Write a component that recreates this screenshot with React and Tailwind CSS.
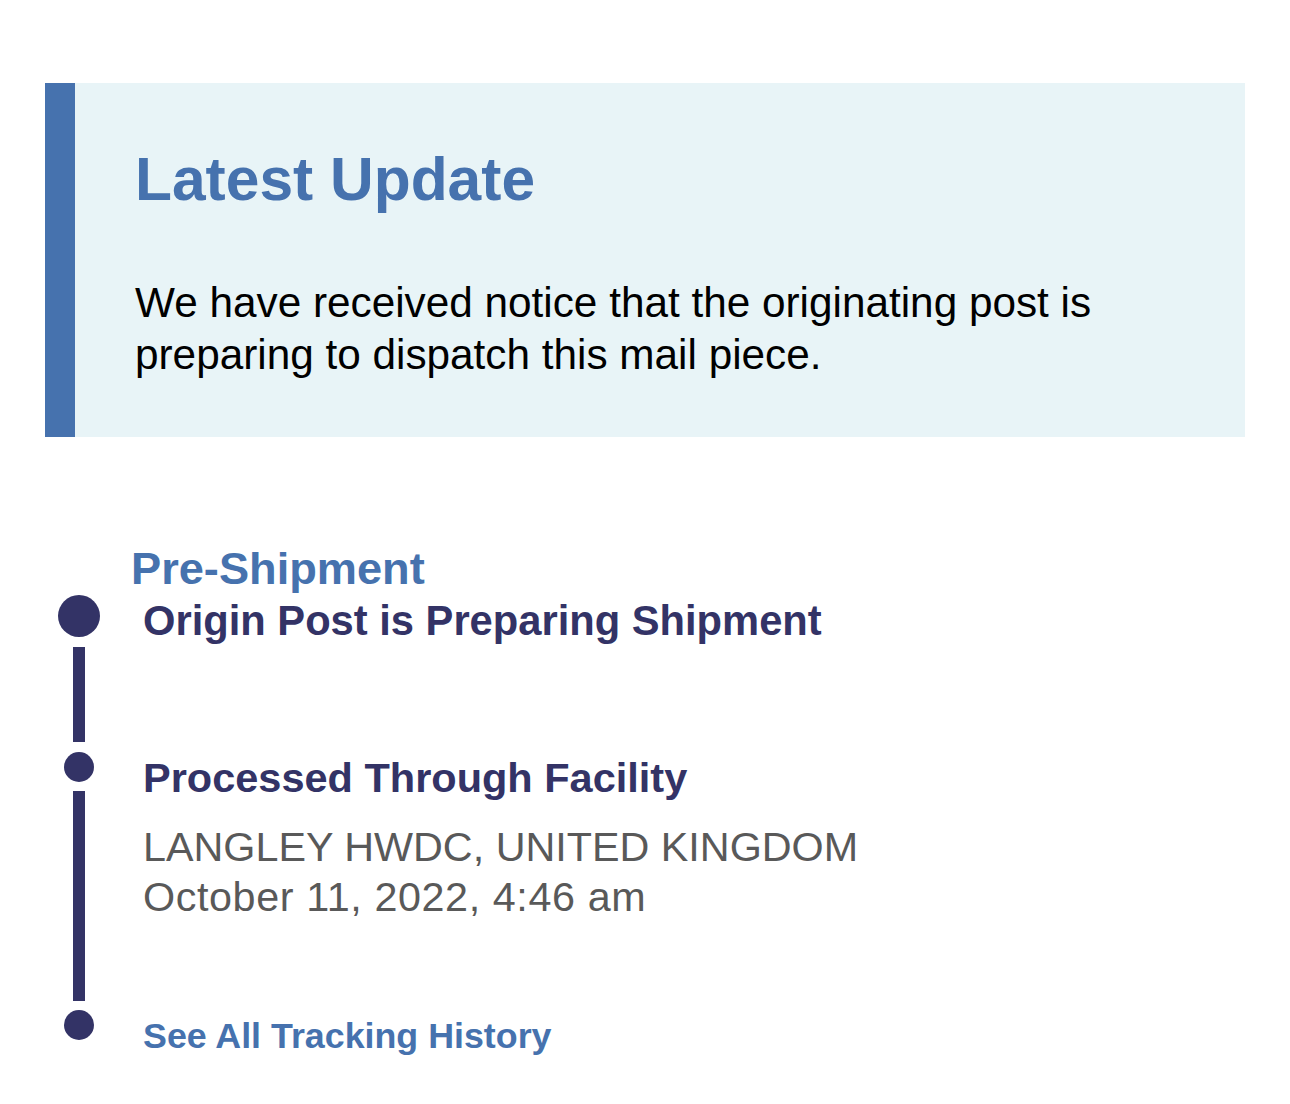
const font = { fontFamily: '"Liberation Sans", Arial, sans-serif' }

function Dot({ size }) {
  return <span className={`shrink-0 rounded-full bg-[#333366] ${size}`} />
}

function TimelineRow({ dot, bar, children }) {
  return (
    <div className="flex">
      <div className="flex w-[42px] shrink-0 flex-col items-center">
        <Dot size={dot} />
        {bar && <span className={`w-[12px] flex-1 bg-[#333366] ${bar}`} />}
      </div>
      <div className="ml-[43px] flex-1">{children}</div>
    </div>
  )
}

export default function App() {
  return (
    <div className="min-h-[1104px] bg-white px-[45px] pt-[83px]" style={font}>
      {/* latest update card */}
      <section className="flex bg-[#e8f4f7]">
        <div className="w-[30px] shrink-0 bg-[#4672ae]" />
        <div className="pl-[60px] pr-[40px] pt-[62px] pb-[56px]">
          <h2 className="text-[60.5px] font-bold leading-[69px] text-[#4672ae]">Latest Update</h2>
          <p className="mt-[63px] text-[42.3px] leading-[52px] text-black">
            We have received notice that the originating post is preparing to dispatch this mail piece.
          </p>
        </div>
      </section>

      {/* tracking timeline */}
      <section className="pt-[106px] pl-[13px]">
        <h3 className="pl-[73px] text-[45.2px] font-bold leading-[52px] text-[#4672ae]">Pre-Shipment</h3>

        <TimelineRow dot="h-[42px] w-[42px]" bar="my-[10px]">
          <div className="mt-[2px] pb-[107px] text-[41.7px] font-bold leading-[48px] text-[#333366]">
            Origin Post is Preparing Shipment
          </div>
        </TimelineRow>

        <TimelineRow dot="h-[30px] w-[30px]" bar="my-[9px]">
          <div className="mt-[2px] pb-[88px]">
            <div className="text-[41.5px] font-bold leading-[48px] text-[#333366]">Processed Through Facility</div>
            <div className="mt-[20px] text-[41.3px] leading-[50px] text-[#595959]">
              <div>LANGLEY HWDC, UNITED KINGDOM</div>
              <div className="tracking-[0.6px]">October 11, 2022, 4:46 am</div>
            </div>
          </div>
        </TimelineRow>

        <TimelineRow dot="h-[30px] w-[30px]">
          <a href="#" className="mt-[6px] block text-[35.8px] font-bold leading-[41px] text-[#4672ae]">
            See All Tracking History
          </a>
        </TimelineRow>
      </section>
    </div>
  )
}
